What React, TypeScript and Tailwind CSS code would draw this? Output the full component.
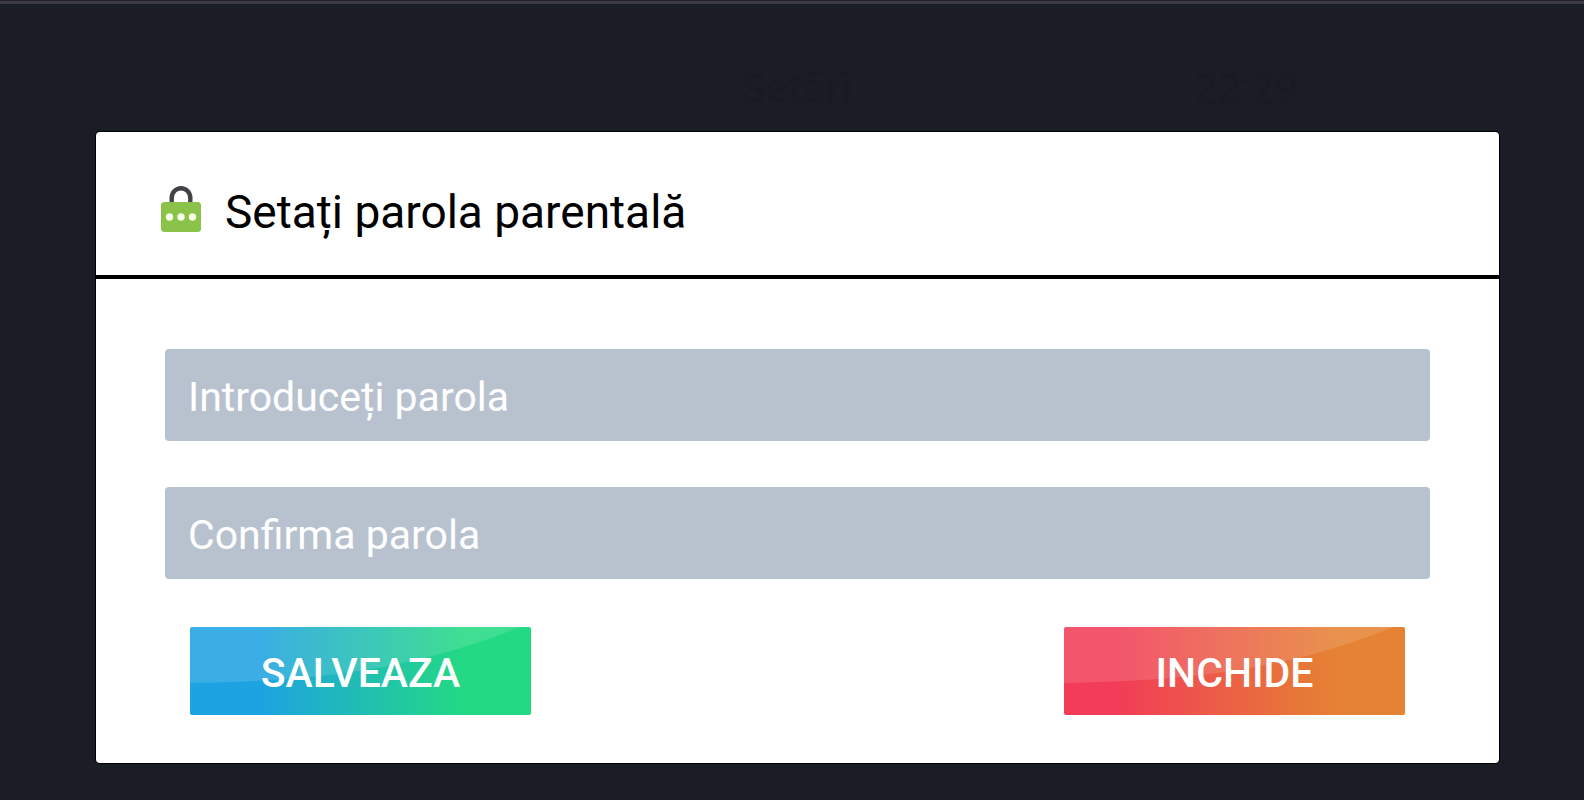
import React, { useState } from "react";

function LockIcon() {
  return (
    <svg viewBox="0 0 40 46" className="h-[46px] w-10 shrink-0" aria-hidden="true">
      <path
        d="M10.7 18V12a9.3 9.8 0 0 1 18.6 0V18"
        fill="none"
        stroke="#424347"
        strokeWidth="4.4"
      />
      <rect x="0" y="16" width="40" height="30" rx="3.5" fill="#8bc34a" />
      <circle cx="8.5" cy="31" r="3.7" fill="#f5ffe6" />
      <circle cx="20" cy="31" r="3.7" fill="#f5ffe6" />
      <circle cx="31.5" cy="31" r="3.7" fill="#f5ffe6" />
    </svg>
  );
}

// lighter sheen over the upper left part of a button
function Gloss() {
  return (
    <svg
      viewBox="0 0 341 88"
      preserveAspectRatio="none"
      className="absolute inset-0 h-full w-full"
      aria-hidden="true"
    >
      <path d="M0 0V56C130 54 225 42 330 0Z" fill="#fff" fillOpacity="0.13" />
    </svg>
  );
}

type PasswordFieldProps = {
  id: string;
  label: string;
  value: string;
  onChange: (value: string) => void;
};

function PasswordField({ id, label, value, onChange }: PasswordFieldProps) {
  return (
    <input
      id={id}
      type="password"
      value={value}
      aria-label={label}
      placeholder={label}
      onChange={(e) => onChange(e.target.value)}
      className="w-full rounded-[4px] bg-[#b8c2cf] px-[23px] pt-4 pb-3 text-[41px] leading-[64px] text-white outline-none placeholder:text-white"
    />
  );
}

export default function App() {
  const [password, setPassword] = useState("");
  const [confirm, setConfirm] = useState("");

  return (
    <div className="flex min-h-screen flex-col bg-[#1a1d25] font-[Roboto,sans-serif]">
      <div className="h-1 border-t border-[#222128] bg-[#3b3a42]" />
      <header className="grid h-32 grid-cols-3 items-center px-24 pt-10 text-[42px] font-bold text-[#191b23]">
        <span />
        <h1 className="pl-2 text-center">Setări</h1>
        <span className="pr-[190px] text-right font-normal">22:29</span>
      </header>

      <main
        role="dialog"
        aria-labelledby="dialog-title"
        className="mr-[85px] ml-24 rounded-[4px] bg-white ring-1 ring-black"
      >
        <div className="flex h-[147px] items-center gap-6 border-b-4 border-black pt-2.5 pr-16 pl-[65px]">
          <LockIcon />
          <h2 id="dialog-title" className="pt-2 text-[46px] text-black">
            Setați parola parentală
          </h2>
        </div>

        <form
          onSubmit={(e) => e.preventDefault()}
          className="flex flex-col gap-[46px] px-[69px] pt-[70px] pb-12"
        >
          <PasswordField
            id="password"
            label="Introduceți parola"
            value={password}
            onChange={setPassword}
          />
          <PasswordField
            id="confirm"
            label="Confirma parola"
            value={confirm}
            onChange={setConfirm}
          />
          <div className="flex justify-between px-[25px] pt-0.5">
            <button
              type="submit"
              className="relative h-[88px] w-[341px] overflow-hidden rounded-[2px] bg-linear-to-r/srgb from-[#1da2e2] from-20% to-[#23d984] to-80% pt-1.5 text-[41px] font-medium text-white"
            >
              <Gloss />
              <span className="relative">SALVEAZA</span>
            </button>
            <button
              type="button"
              className="relative h-[88px] w-[341px] overflow-hidden rounded-[2px] bg-linear-to-r/srgb from-[#f23c58] from-15% to-[#e58233] to-80% pt-1.5 text-[41px] font-medium text-white"
            >
              <Gloss />
              <span className="relative">INCHIDE</span>
            </button>
          </div>
        </form>
      </main>
    </div>
  );
}
